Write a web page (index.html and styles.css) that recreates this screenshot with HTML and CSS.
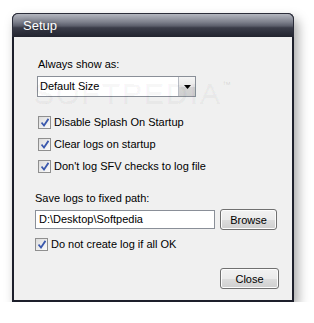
FILE: index.html
```html
<!DOCTYPE html>
<html lang="en">
<head>
    <meta charset="UTF-8">
    <title>Setup</title>
    <link rel="stylesheet" href="styles.css">
</head>
<body>
    <!-- Setup dialog -->
    <div class="window">
        <div class="titlebar">Setup</div>
        <div class="client">
            <div class="group-top">
                <div class="label">Always show as:</div>
                <div class="combo">
                    <span class="combo-text">Default Size</span>
                    <span class="combo-btn">
                        <svg width="7" height="4" viewBox="0 0 7 4"><path d="M0 0H7L3.5 4Z" fill="#000"/></svg>
                    </span>
                </div>

                <div class="checks">
                    <label class="check"><span class="box"></span>Disable Splash On Startup</label>
                    <label class="check"><span class="box"></span>Clear logs on startup</label>
                    <label class="check"><span class="box"></span>Don't log SFV checks to log file</label>
                </div>
            </div>

            <div class="group-bottom">
                <div class="label">Save logs to fixed path:</div>
                <div class="path-row">
                    <div class="textbox">D:\Desktop\Softpedia</div>
                    <button class="btn btn-browse">Browse</button>
                </div>
                <label class="check check-last"><span class="box"></span>Do not create log if all OK</label>
            </div>

            <div class="footer-row">
                <button class="btn btn-close">Close</button>
            </div>

            <!-- watermark -->
            <div class="watermark">SOFTPEDIA<span class="tm">™</span></div>
        </div>
    </div>
</body>
</html>
```

FILE: styles.css
```css
/* Page */
body {
    margin: 0;
    background: #ffffff;
    font-family: "Liberation Sans", Arial, sans-serif;
    font-size: 11px;
    color: #000;
}

/* Window frame */
.window {
    margin: 13px 0 0 12px;
    width: 282px;
    border-radius: 6px 6px 0 0;
    box-shadow: 4px 6px 12px rgba(0, 0, 0, 0.35);
    background: #1d1f2b;
    padding: 0 2px 2px 2px;
    box-sizing: border-box;
}

.titlebar {
    height: 24px;
    margin: 0 -2px;
    padding: 3px 0 0 10px;
    box-sizing: border-box;
    border-radius: 6px 6px 0 0;
    border: 1px solid #2b2d3a;
    border-bottom: none;
    background: linear-gradient(#b4b7c0 0%, #7d808c 35%, #5b5e6b 52%, #3a3c49 60%, #22242f 100%);
    color: #ffffff;
    font-size: 13px;
    line-height: 17px;
    text-shadow: 0 0 4px rgba(0, 0, 0, 0.4);
}

.client {
    position: relative;
    background: #f0f0f0;
    height: 263px;
    padding: 21px 13px 0 21px;
    box-sizing: border-box;
    display: flex;
    flex-direction: column;
}

.label {
    line-height: 13px;
    height: 13px;
}

/* Combo box */
.group-top {
    padding-left: 3px;
}

.combo {
    margin-top: 5px;
    width: 159px;
    height: 21px;
    box-sizing: border-box;
    border: 1px solid #8a8f98;
    background: #fff;
    display: flex;
    align-items: stretch;
    margin-left: -1px;
}

.combo-text {
    flex: 1;
    padding: 3px 0 0 2px;
    line-height: 13px;
}

.combo-btn {
    width: 16px;
    border-left: 1px solid #b8bcc4;
    background: linear-gradient(#f6f6f6 0%, #e8e8e8 50%, #d5d5d5 51%, #cfcfcf 100%);
    display: flex;
    justify-content: center;
    align-items: center;
}

/* Checkboxes */
.checks {
    margin-top: 19px;
    display: flex;
    flex-direction: column;
    gap: 9px;
}

.check {
    display: flex;
    align-items: center;
    gap: 3px;
    height: 13px;
    line-height: 13px;
}

.box {
    width: 13px;
    height: 13px;
    box-sizing: border-box;
    border: 1px solid #8f8f8f;
    background: linear-gradient(135deg, #dcdcdc, #fbfbfb);
    position: relative;
    flex: none;
}

.box::after {
    content: "";
    position: absolute;
    left: 2px;
    top: 1px;
    width: 8px;
    height: 9px;
    background: url("data:image/svg+xml;utf8,<svg xmlns='http://www.w3.org/2000/svg' width='8' height='9' viewBox='0 0 8 9'><path d='M0.5 4.5L3 7.5L7.5 0.8' fill='none' stroke='%233a58ad' stroke-width='1.8'/></svg>") no-repeat;
}

/* Path row */
.group-bottom {
    margin-top: 19px;
}

.path-row {
    margin-top: 4px;
    display: flex;
    align-items: center;
    gap: 5px;
}

.textbox {
    width: 180px;
    height: 19px;
    box-sizing: border-box;
    border: 1px solid #8a8f98;
    background: #fff;
    padding: 2px 0 0 3px;
    line-height: 13px;
}

.btn {
    font-family: "Liberation Sans", Arial, sans-serif;
    font-size: 11px;
    color: #000;
    height: 21px;
    box-sizing: border-box;
    border: 1px solid #707070;
    border-radius: 3px;
    background: linear-gradient(#f2f2f2 0%, #ebebeb 50%, #dddddd 51%, #cfcfcf 100%);
    box-shadow: inset 0 0 0 1px #fcfcfc;
    padding: 0;
}

.btn-browse {
    width: 57px;
}

.check-last {
    margin-top: 8px;
}

.footer-row {
    margin-top: 17px;
    display: flex;
    justify-content: flex-end;
}

.btn-close {
    width: 59px;
}

/* Watermark */
.watermark {
    position: absolute;
    left: 20px;
    top: 40px;
    font-size: 30px;
    letter-spacing: 2px;
    color: rgba(0, 0, 0, 0.03);
    -webkit-text-stroke: 0.6px rgba(0, 0, 0, 0.06);
    pointer-events: none;
}

.watermark .tm {
    font-size: 9px;
    vertical-align: 16px;
    -webkit-text-stroke: 0;
    color: rgba(0, 0, 0, 0.12);
}
```
